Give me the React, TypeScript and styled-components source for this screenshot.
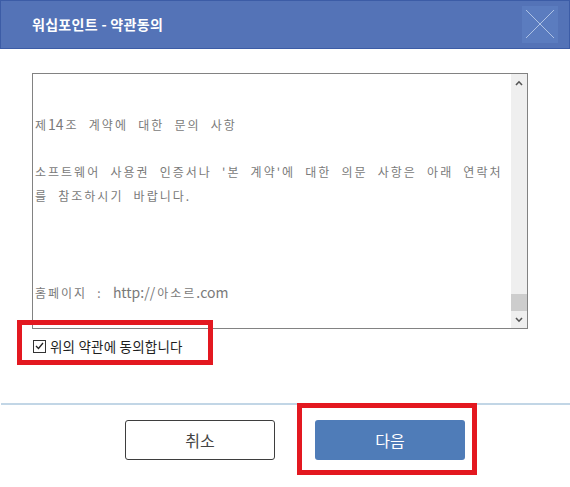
import React from "react";
import styled, { createGlobalStyle } from "styled-components";

const GlobalStyle = createGlobalStyle`
  html, body {
    margin: 0;
    padding: 0;
    background: #ffffff;
  }
  body {
    font-family: "Noto Sans CJK KR", "Noto Sans", sans-serif;
  }
`;

const Window = styled.div`
  position: relative;
  width: 570px;
  height: 487px;
  display: flex;
  flex-direction: column;
  background: #ffffff;
  overflow: hidden;
`;

const TitleBar = styled.div`
  box-sizing: border-box;
  height: 49px;
  display: flex;
  align-items: center;
  justify-content: space-between;
  padding: 0 11px 1px 31px;
  background: #5473b7;
  border: 1px solid #3c5ca6;
`;

const Title = styled.h1`
  margin: 0;
  font-size: 14px;
  font-weight: 700;
  color: #ffffff;
  letter-spacing: 0.3px;
`;

const CloseButton = styled.button`
  width: 36px;
  height: 37px;
  padding: 0;
  border: none;
  background: #5b7cbf;
  display: flex;
  align-items: center;
  justify-content: center;
  cursor: pointer;
`;

const Content = styled.div`
  display: flex;
  flex-direction: column;
  padding: 24px 0 0 32px;
`;

const TermsBox = styled.div`
  box-sizing: border-box;
  width: 496px;
  height: 256px;
  border: 1px solid #828282;
  display: flex;
`;

const TermsText = styled.div`
  flex: 1;
  padding: 38px 0 0 2px;
  font-size: 12px;
  line-height: 24px;
  letter-spacing: 2px;
  word-spacing: 5.5px;
  color: #7a7a7a;
  white-space: nowrap;
  overflow: hidden;
`;

const Line = styled.div`
  height: 24px;
`;

// latin runs in the terms are set tighter and a bit larger than the hangul
const Latin = styled.span`
  font-size: 14px;
  letter-spacing: 0;
  margin-right: 2px;
`;

const Scrollbar = styled.div`
  width: 16px;
  display: flex;
  flex-direction: column;
  background: #efefef;
`;

const ScrollArrow = styled.div`
  height: 17px;
  display: flex;
  align-items: center;
  justify-content: center;
`;

const ScrollTrack = styled.div`
  flex: 1;
  display: flex;
  flex-direction: column;
  justify-content: flex-end;
`;

const ScrollThumb = styled.div`
  height: 17px;
  background: #cdcdcd;
`;

const AgreeRow = styled.label`
  display: flex;
  align-items: center;
  gap: 4px;
  height: 20px;
  margin-top: 7px;
  padding-left: 1px;
  font-size: 13.5px;
  letter-spacing: 0.2px;
  color: #1e1e1e;
`;

const CheckBox = styled.span`
  box-sizing: border-box;
  width: 13px;
  height: 13px;
  border: 1px solid #333333;
  background: #ffffff;
  display: flex;
  align-items: center;
  justify-content: center;
`;

const Divider = styled.hr`
  margin: 47px 0 0 1px;
  height: 2px;
  border: none;
  background: #c2d6e6;
`;

const Footer = styled.div`
  display: flex;
  gap: 40px;
  padding: 15px 0 0 125px;
`;

const Button = styled.button<{ $primary?: boolean }>`
  box-sizing: border-box;
  width: 150px;
  height: 40px;
  border-radius: 3px;
  font-family: "Noto Sans CJK KR", "Noto Sans", sans-serif;
  font-size: 16px;
  cursor: pointer;
  border: ${(p) => (p.$primary ? "none" : "1px solid #3e3e3e")};
  background: ${(p) => (p.$primary ? "#4f7cb8" : "#ffffff")};
  color: ${(p) => (p.$primary ? "#ffffff" : "#444444")};
`;

// red annotation frames drawn over the screenshot
const Highlight = styled.div`
  position: absolute;
  box-sizing: border-box;
  border: 5px solid #e31820;
  pointer-events: none;
`;

const Chevron = ({ up }: { up?: boolean }) => (
  <svg width="8" height="6" viewBox="0 0 8 6">
    <path
      d={up ? "M1 5 L4 1.8 L7 5" : "M1 1 L4 4.2 L7 1"}
      fill="none"
      stroke="#555555"
      strokeWidth="1.6"
    />
  </svg>
);

export default function App() {
  return (
    <>
      <GlobalStyle />
      <Window>
        <TitleBar>
          <Title>워십포인트 - 약관동의</Title>
          <CloseButton aria-label="닫기">
            <svg width="32" height="30" viewBox="0 0 32 30">
              <path d="M2 1 L30 29 M30 1 L2 29" stroke="#aec2e4" strokeWidth="1" />
            </svg>
          </CloseButton>
        </TitleBar>

        <Content>
          <TermsBox>
            <TermsText>
              <Line>
                제<Latin>14</Latin>조 계약에 대한 문의 사항
              </Line>
              <Line />
              <Line>소프트웨어 사용권 인증서나 '본 계약'에 대한 의문 사항은 아래 연락처</Line>
              <Line>를 참조하시기 바랍니다.</Line>
              <Line />
              <Line />
              <Line />
              <Line>
                홈페이지 : <Latin>http://</Latin>아소르<Latin>.com</Latin>
              </Line>
            </TermsText>
            <Scrollbar>
              <ScrollArrow>
                <Chevron up />
              </ScrollArrow>
              <ScrollTrack>
                <ScrollThumb />
              </ScrollTrack>
              <ScrollArrow>
                <Chevron />
              </ScrollArrow>
            </Scrollbar>
          </TermsBox>

          <AgreeRow>
            <CheckBox>
              <svg width="9" height="8" viewBox="0 0 9 8">
                <path d="M1 4 L3.5 6.5 L8 1" fill="none" stroke="#222222" strokeWidth="1.3" />
              </svg>
            </CheckBox>
            위의 약관에 동의합니다
          </AgreeRow>
        </Content>

        <Divider />

        <Footer>
          <Button>취소</Button>
          <Button $primary>다음</Button>
        </Footer>

        <Highlight style={{ left: 17, top: 320, width: 196, height: 45 }} />
        <Highlight style={{ left: 297, top: 403, width: 180, height: 72 }} />
      </Window>
    </>
  );
}
